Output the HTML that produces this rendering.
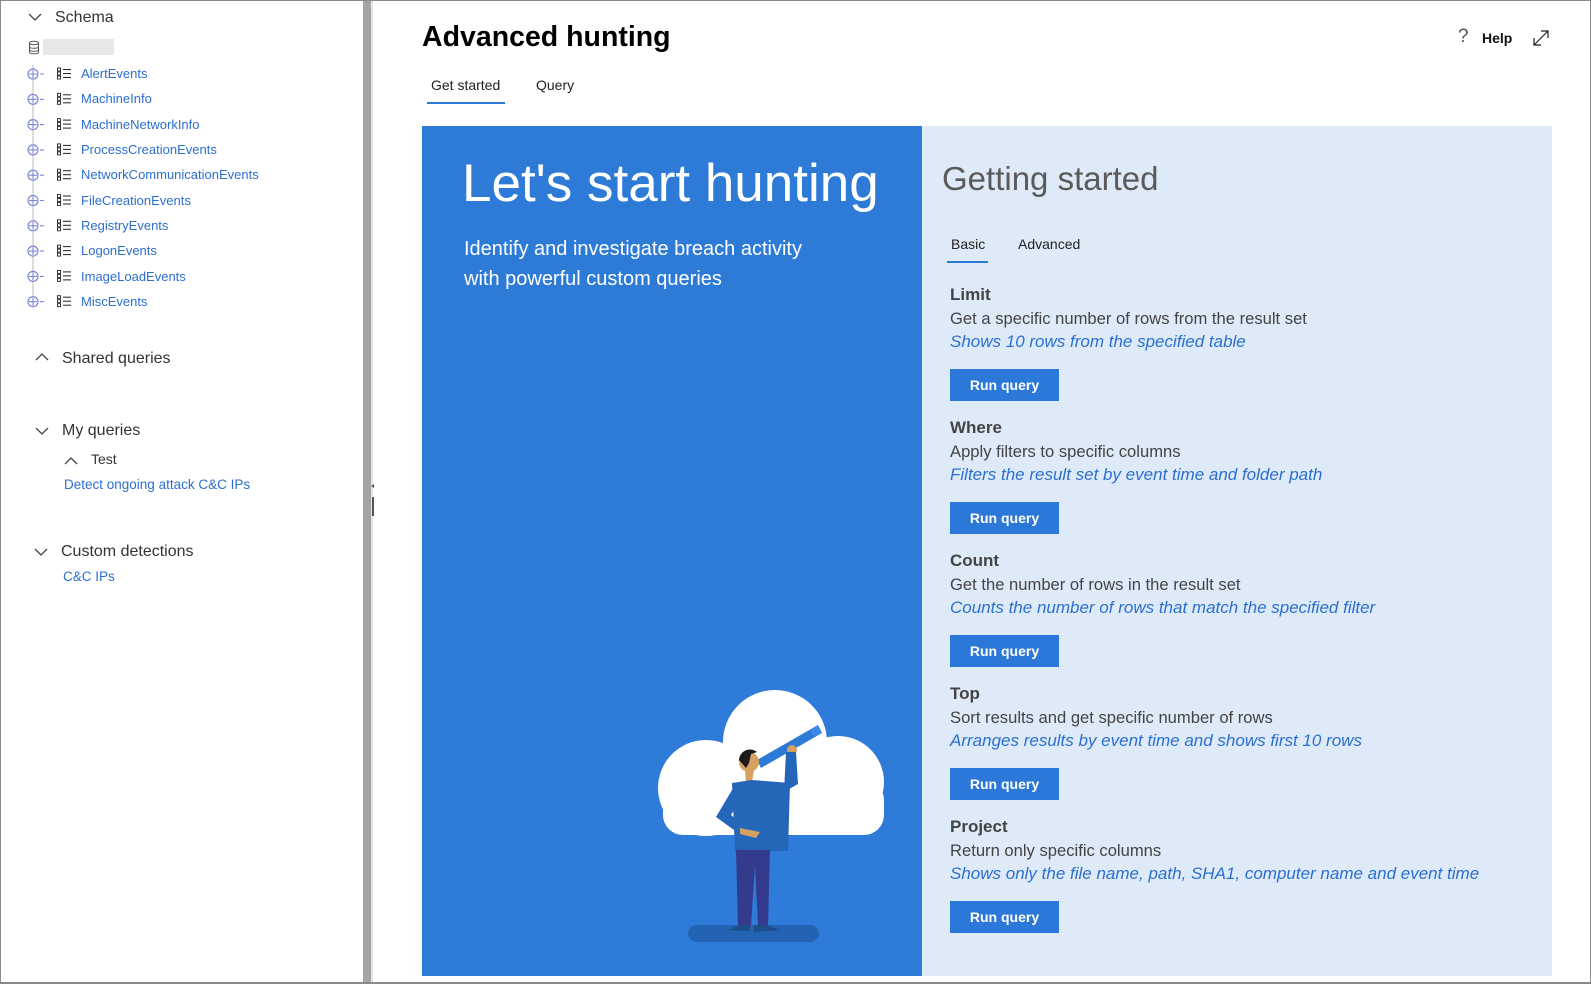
<!DOCTYPE html>
<html><head><meta charset="utf-8"><style>
*{margin:0;padding:0;box-sizing:border-box}
body{width:1591px;height:984px;position:relative;background:#fff;font-family:"Segoe UI","Liberation Sans",sans-serif;overflow:hidden}
.a{position:absolute;white-space:nowrap}
.frame{position:absolute;left:0;top:0;width:1591px;height:984px;border:1px solid #8a8a8a;border-bottom:2px solid #8a8a8a;pointer-events:none}
.item{position:absolute;left:81px;font-size:13px;color:#2b6fd1;line-height:16px}
.sec{font-size:16px;color:#333;line-height:20px}
.h{font-size:17px;font-weight:bold;color:#444;line-height:20px}
.d{font-size:16.6px;color:#444;line-height:20px}
.i{font-size:17px;font-style:italic;color:#2b6fd1;line-height:20px}
.btn{position:absolute;left:950px;width:109px;height:32px;background:#2b78d8;color:#fff;font-weight:bold;font-size:14px;line-height:32px;text-align:center}
</style></head><body>

<svg class="a" style="left:0;top:0" width="380" height="984">
 <polyline points="29,14 35,20 41,14" fill="none" stroke="#444" stroke-width="1.3"/>
 <g fill="none" stroke="#555" stroke-width="1"><ellipse cx="34" cy="43" rx="4.5" ry="1.8"/><path d="M29.5 43v9c0 2.4 9 2.4 9 0v-9M29.5 46.5c0 2.4 9 2.4 9 0M29.5 49.5c0 2.4 9 2.4 9 0"/></g>
 <rect x="43" y="39" width="71" height="16" fill="#e8e8e8"/>
 <line x1="33" y1="65" x2="33" y2="300" stroke="#bbb" stroke-width="1"/>
 <g id="rows"></g>
 <polyline points="36,360 42,354 48,360" fill="none" stroke="#444" stroke-width="1.3"/>
 <polyline points="36,428 42,434 48,428" fill="none" stroke="#444" stroke-width="1.3"/>
 <polyline points="65,464 71,458 77,464" fill="none" stroke="#444" stroke-width="1.3"/>
 <polyline points="35,549 41,555 47,549" fill="none" stroke="#444" stroke-width="1.3"/>
 <rect x="363" y="0" width="8" height="984" fill="#a2a4aa"/>
 <rect x="371" y="0" width="2" height="984" fill="#e6e6e6"/>
 <rect x="372" y="497" width="2" height="19" fill="#555"/>
 <path d="M374 484l-3 2 3 2z" fill="#555"/>
</svg>
<div class="a sec" style="left:55px;top:8px;font-size:16px">Schema</div>
<div class="item" style="top:66px">AlertEvents</div>
<div class="item" style="top:91px">MachineInfo</div>
<div class="item" style="top:117px">MachineNetworkInfo</div>
<div class="item" style="top:142px">ProcessCreationEvents</div>
<div class="item" style="top:167px">NetworkCommunicationEvents</div>
<div class="item" style="top:193px">FileCreationEvents</div>
<div class="item" style="top:218px">RegistryEvents</div>
<div class="item" style="top:243px">LogonEvents</div>
<div class="item" style="top:269px">ImageLoadEvents</div>
<div class="item" style="top:294px">MiscEvents</div>
<div class="a sec" style="left:62px;top:349px">Shared queries</div>
<div class="a sec" style="left:62px;top:421px">My queries</div>
<div class="a" style="left:91px;top:451px;font-size:14px;color:#333">Test</div>
<div class="a" style="left:64px;top:477px;font-size:13.5px;color:#2b6fd1">Detect ongoing attack C&amp;C IPs</div>
<div class="a sec" style="left:61px;top:542px">Custom detections</div>
<div class="a" style="left:63px;top:569px;font-size:13.5px;color:#2b6fd1">C&amp;C IPs</div>

<div class="a" style="left:422px;top:21px;font-size:28.5px;font-weight:bold;color:#000">Advanced hunting</div>
<div class="a" style="left:431px;top:77px;font-size:14px;color:#222">Get started</div>
<div class="a" style="left:536px;top:77px;font-size:14px;color:#222">Query</div>
<div class="a" style="left:427px;top:102px;width:78px;height:2px;background:#2b78d8"></div>
<div class="a" style="left:1458px;top:26px;font-size:19px;color:#555">?</div>
<div class="a" style="left:1482px;top:30px;font-size:14px;font-weight:bold;color:#111">Help</div>
<svg class="a" style="left:1532px;top:29px" width="18" height="18"><path d="M2 16L16 2M9 2h7v7M2 9v7h7" fill="none" stroke="#222" stroke-width="1.2"/></svg>

<div class="a" style="left:422px;top:126px;width:500px;height:850px;background:#2d7ad7"></div>
<div class="a" style="left:462px;top:153px;font-size:53px;color:#fff;font-weight:300">Let's start hunting</div>
<div class="a" style="left:464px;top:234px;font-size:20px;line-height:30px;color:#fff">Identify and investigate breach activity<br>with powerful custom queries</div>
<svg class="a" style="left:640px;top:670px" width="260" height="300">
 <rect x="15" y="10" width="230" height="262" fill="#2e7bd9"/>
 <g fill="#fff"><circle cx="66" cy="118" r="48"/><circle cx="135" cy="72" r="52"/><circle cx="198" cy="112" r="46"/><rect x="23" y="110" width="221" height="55" rx="20"/><rect x="60" y="100" width="150" height="65"/></g>
 <rect x="48" y="255" width="131" height="17" rx="8.5" fill="#2263b4"/>
 <path d="M117 90L178 55l4 8-61 35z" fill="#2d7ad7"/><path d="M170 60l8-5 4 8-8 4z" fill="#3a8ae6"/>
 <circle cx="152" cy="80" r="5" fill="#d4a160"/>
 <path d="M146 82l10 0 2 32-14 8z" fill="#2466b8"/>
 <circle cx="109" cy="92" r="10" fill="#d4a160"/><path d="M99 90a11 11 0 0 1 18-8l-6 2-2 9-3 5z" fill="#1b1b1b"/>
 <path d="M105 100h9l-2 12h-6z" fill="#d4a160"/>
 <path d="M92 113l20-3 38 3-2 68H95z" fill="#2466b8"/>
 <path d="M95 115l-19 32 25 18 4-8-14-12 10-18z" fill="#2466b8"/>
 <path d="M100 158l20 4-4 6-16-4z" fill="#d4a160"/>
 <path d="M96 180h34l-2 76h-10l-3-60-4 60h-13z" fill="#353b8c"/>
 <path d="M88 260l12-5h10v6zM114 255h12l14 5-26 2z" fill="#1d4e8a"/>
</svg>

<div class="a" style="left:922px;top:126px;width:630px;height:850px;background:#deeaf8"></div>
<div class="a" style="left:942px;top:160px;font-size:33px;color:#5a5a5a;font-weight:300">Getting started</div>
<div class="a" style="left:951px;top:236px;font-size:14px;color:#222">Basic</div>
<div class="a" style="left:1018px;top:236px;font-size:14px;color:#222">Advanced</div>
<div class="a" style="left:947px;top:261px;width:41px;height:2px;background:#2b78d8"></div>

<div class="a h" style="left:950px;top:285px">Limit</div>
<div class="a d" style="left:950px;top:309px">Get a specific number of rows from the result set</div>
<div class="a i" style="left:950px;top:332px">Shows 10 rows from the specified table</div>
<div class="btn" style="top:369px">Run query</div>

<div class="a h" style="left:950px;top:418px">Where</div>
<div class="a d" style="left:950px;top:442px">Apply filters to specific columns</div>
<div class="a i" style="left:950px;top:465px">Filters the result set by event time and folder path</div>
<div class="btn" style="top:502px">Run query</div>

<div class="a h" style="left:950px;top:551px">Count</div>
<div class="a d" style="left:950px;top:575px">Get the number of rows in the result set</div>
<div class="a i" style="left:950px;top:598px">Counts the number of rows that match the specified filter</div>
<div class="btn" style="top:635px">Run query</div>

<div class="a h" style="left:950px;top:684px">Top</div>
<div class="a d" style="left:950px;top:708px">Sort results and get specific number of rows</div>
<div class="a i" style="left:950px;top:731px">Arranges results by event time and shows first 10 rows</div>
<div class="btn" style="top:768px">Run query</div>

<div class="a h" style="left:950px;top:817px">Project</div>
<div class="a d" style="left:950px;top:841px">Return only specific columns</div>
<div class="a i" style="left:950px;top:864px">Shows only the file name, path, SHA1, computer name and event time</div>
<div class="btn" style="top:901px">Run query</div>

<div class="frame"></div>
<script>
var g=document.getElementById('rows'),s='';
for(var i=0;i<10;i++){var y=74+i*25.3;
s+='<circle cx="33" cy="'+y+'" r="5" fill="#fff" stroke="#7c86d6" stroke-width="1.2"/><path d="M29 '+y+'h8M33 '+(y-4)+'v8M40 '+y+'h4" stroke="#7c86d6" stroke-width="1.1"/>';
for(var k=0;k<3;k++){var yy=y-5+k*4;s+='<rect x="57.5" y="'+(yy-1)+'" width="3" height="3" fill="none" stroke="#222" stroke-width="0.9"/><line x1="63" y1="'+(yy+0.5)+'" x2="71" y2="'+(yy+0.5)+'" stroke="#222" stroke-width="1"/>';}}
g.innerHTML=s;
</script>
</body></html>
